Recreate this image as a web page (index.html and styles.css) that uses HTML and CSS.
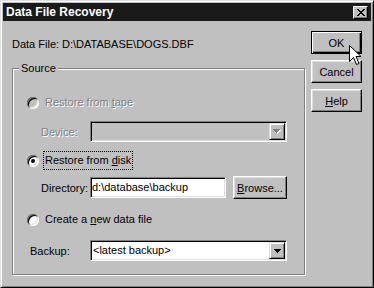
FILE: index.html
```html
<!DOCTYPE html>
<html lang="en">
<head>
    <meta charset="UTF-8">
    <title>Data File Recovery</title>
    <link rel="stylesheet" href="styles.css">
</head>
<body>
    <div class="window">
        <div class="titlebar">
            <span class="title">Data File Recovery</span>
            <span class="close">
                <svg width="8" height="7" viewBox="0 0 8 7" shape-rendering="crispEdges">
                    <path d="M0 0h2v1h1v1h2v-1h1v-1h2v1h-1v1h-1v1h-1v1h1v1h1v1h1v1h-2v-1h-1v-1h-2v1h-1v1h-2v-1h1v-1h1v-1h1v-1h-1v-1h-1v-1h-1z" fill="#000"/>
                </svg>
            </span>
        </div>
        <div class="body">
            <div class="main">
                <div class="datafile">
                    <span class="df-label">Data File:</span>
                    <span>D:\DATABASE\DOGS.DBF</span>
                </div>
                <div class="groupbox">
                    <span class="legend">Source</span>

                    <div class="opt disabled">
                        <span class="radio"></span>
                        <span class="opt-label">Restore from <u>t</u>ape</span>
                    </div>
                    <div class="field-row row-device">
                        <span class="field-label disabled">Device:</span>
                        <div class="field combo combo-off">
                            <span class="combo-text"></span>
                            <span class="drop">
                                <svg width="8" height="5" viewBox="0 0 8 5" shape-rendering="crispEdges">
                                    <path d="M1 1h7v1h-1v1h-1v1h-1v1h-1v-1h-1v-1h-1v-1h-1z" fill="#fff"/>
                                    <path d="M0 0h7v1h-1v1h-1v1h-1v1h-1v-1h-1v-1h-1v-1h-1z" fill="#808080"/>
                                </svg>
                            </span>
                        </div>
                    </div>

                    <div class="opt row-disk">
                        <span class="radio checked"></span>
                        <span class="opt-label focus">Restore from <u>d</u>isk</span>
                    </div>
                    <div class="field-row row-dir">
                        <span class="field-label">Directory:</span>
                        <div class="field dir-input">d:\database\backup</div>
                        <button class="btn browse"><u>B</u>rowse...</button>
                    </div>

                    <div class="opt row-create">
                        <span class="radio"></span>
                        <span class="opt-label">Create a <u>n</u>ew data file</span>
                    </div>
                    <div class="field-row row-backup">
                        <span class="field-label wide">Backup:</span>
                        <div class="field combo">
                            <span class="combo-text">&lt;latest backup&gt;</span>
                            <span class="drop">
                                <svg width="7" height="4" viewBox="0 0 7 4" shape-rendering="crispEdges">
                                    <path d="M0 0h7v1h-1v1h-1v1h-1v1h-1v-1h-1v-1h-1v-1h-1z" fill="#000"/>
                                </svg>
                            </span>
                        </div>
                    </div>
                </div>
            </div>
            <div class="buttons">
                <button class="btn default">OK</button>
                <button class="btn">Cancel</button>
                <button class="btn"><u>H</u>elp</button>
            </div>
        </div>

        <!-- mouse pointer resting on the OK button -->
        <svg class="pointer" width="14" height="22" viewBox="0 0 14 22">
            <path d="M0.5 0.5V16.5L4.5 12.5L7.5 19.5L10 18.5L7 11.5H12Z" fill="#fff" stroke="#000" stroke-width="1"/>
        </svg>
    </div>
</body>
</html>
```

FILE: styles.css
```css
* {
    margin: 0;
    padding: 0;
    box-sizing: border-box;
}

body {
    background-color: #c0c0c0;
    font-family: "Liberation Sans", Arial, sans-serif;
    font-size: 11px;
    color: #000;
}

.window {
    position: relative;
    width: 374px;
    height: 288px;
    background-color: #c0c0c0;
    border: 1px solid;
    border-color: #dfdfdf #000 #000 #dfdfdf;
    box-shadow: inset 1px 1px #fff, inset -1px -1px #808080;
    padding: 2px;
}

.titlebar {
    height: 18px;
    background-color: #1a1a1a;
    color: #fff;
    display: flex;
    align-items: center;
    justify-content: space-between;
    padding: 0 3px 0 3px;
}

.title {
    font-weight: bold;
    font-size: 12px;
}

.close {
    width: 15px;
    height: 13px;
    background-color: #c0c0c0;
    border: 1px solid;
    border-color: #fff #000 #000 #fff;
    box-shadow: inset -1px -1px #808080;
    display: flex;
    align-items: center;
    justify-content: center;
}

.body {
    display: flex;
    padding: 0 9px;
}

.main {
    width: 293px;
}

.datafile {
    display: flex;
    margin-top: 16px;
    height: 14px;
    line-height: 14px;
}

.df-label {
    width: 50px;
}

/* etched group box */
.groupbox {
    position: relative;
    margin-top: 17px;
    border: 1px solid #808080;
    box-shadow: inset 1px 1px #fff, 1px 1px #fff;
    padding: 24px 16px 13px 14px;
}

.legend {
    position: absolute;
    top: -8px;
    left: 6px;
    padding: 0 2px;
    line-height: 14px;
    background-color: #c0c0c0;
}

.opt {
    display: flex;
    align-items: center;
    height: 19px;
}

.opt-label {
    margin-left: 4px;
    border: 1px dotted transparent;
    padding: 1px 1px;
    line-height: 15px;
}

.opt-label.focus {
    border-color: #000;
}

.radio {
    position: relative;
    width: 12px;
    height: 12px;
    border-radius: 50%;
    background-color: #fff;
    box-shadow: inset 1px 1px #808080, inset -1px -1px #fff, inset 2px 2px #000, inset -2px -2px #dfdfdf;
}

.disabled .radio {
    background-color: #c0c0c0;
}

.radio.checked::after {
    content: "";
    position: absolute;
    left: 4px;
    top: 4px;
    width: 4px;
    height: 4px;
    border-radius: 50%;
    background-color: #000;
}

.disabled .opt-label,
.field-label.disabled {
    color: #808080;
    text-shadow: 1px 1px #fff;
}

.field-row {
    display: flex;
    align-items: center;
}

.field-label {
    width: 49px;
    margin-left: 14px;
}

.field-label.wide {
    width: 60px;
    margin-left: 3px;
}

.field {
    height: 21px;
    line-height: 19px;
    background-color: #fff;
    border: 1px solid;
    border-color: #808080 #fff #fff #808080;
    box-shadow: inset 1px 1px #000, inset -1px -1px #dfdfdf;
    padding-left: 1px;
    white-space: nowrap;
}

.combo {
    width: 197px;
    display: flex;
    align-items: center;
    justify-content: space-between;
    padding: 1px 1px 1px 1px;
}

.combo-text {
    padding-left: 1px;
}

.combo-off {
    background-color: #c0c0c0;
}

.drop {
    width: 16px;
    height: 17px;
    background-color: #c0c0c0;
    border: 1px solid;
    border-color: #dfdfdf #000 #000 #dfdfdf;
    box-shadow: inset 1px 1px #fff, inset -1px -1px #808080;
    display: flex;
    align-items: center;
    justify-content: center;
}

.row-device {
    margin-top: 9px;
}

.row-disk {
    margin-top: 9px;
}

.row-dir {
    margin-top: 6px;
    height: 23px;
}

.dir-input {
    width: 136px;
}

.row-create {
    margin-top: 11px;
}

.row-backup {
    margin-top: 11px;
}

.buttons {
    display: flex;
    flex-direction: column;
    gap: 6px;
    margin-top: 10px;
    margin-left: 6px;
}

.btn {
    width: 51px;
    height: 23px;
    background-color: #c0c0c0;
    border: 1px solid;
    border-color: #fff #000 #000 #fff;
    box-shadow: inset -1px -1px #808080, inset 1px 1px #dfdfdf;
    font-family: "Liberation Sans", Arial, sans-serif;
    font-size: 11px;
    color: #000;
}

.btn.default {
    border-color: #000;
    box-shadow: inset 1px 1px #fff, inset -1px -1px #000, inset -2px -2px #808080;
}

.btn.browse {
    width: 54px;
    margin-left: 7px;
}

.pointer {
    position: absolute;
    left: 348px;
    top: 44px;
}
```
